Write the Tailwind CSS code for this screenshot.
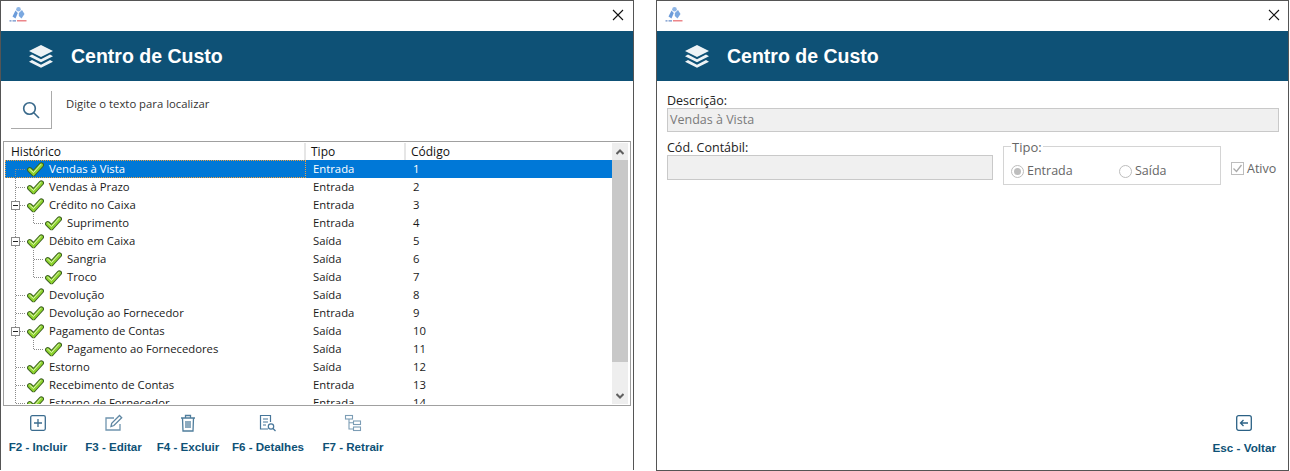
<!DOCTYPE html>
<html lang="en">
<head>
    <meta charset="UTF-8">
    <title>Centro de Custo</title>
    <script src="https://cdn.jsdelivr.net/npm/@tailwindcss/browser@4"></script>
</head>
<body class="bg-white h-[471px] overflow-hidden font-['Open_Sans',sans-serif]">
    <svg class="hidden">
        <symbol id="check" viewBox="0 0 17 15">
            <polyline points="2.700,7.800 6.500,11.500 14.300,3" fill="none" stroke="#3c5f22" stroke-width="5.400" stroke-linejoin="round" stroke-linecap="round"/>
            <polyline points="2.700,7.800 6.500,11.500 14.300,3" fill="none" stroke="#8ed42e" stroke-width="3.400" stroke-linecap="round"/>
            <polyline points="2.500,7 6.500,10.500 14,2.200" fill="none" stroke="#e8f8c8" stroke-width="0.900"/>
        </symbol>
        <symbol id="logo" viewBox="0 0 18 15">
            <circle cx="9.500" cy="2.300" r="2.300" fill="#8fb6e6"/>
            <path d="M3.500 9.500 L6.500 3.500 L8.800 6 L6.500 11.500 Z" fill="#6c9cda"/>
            <path d="M9.800 6 L13 3 L15.500 7 L12.500 11.500 L9.800 9 Z" fill="#7aa8e0"/>
            <path d="M0.500 13.800h2M3.500 13.800h3.500" stroke="#6c8fc8" stroke-width="1.200"/>
            <path d="M8 13.800h9.500" stroke="#e8686c" stroke-width="1.200"/>
        </symbol>
        <symbol id="layers" viewBox="0 0 24 24">
            <path d="M12 1 L24 7 L12 13 L0 7 Z" fill="#eef3f6"/>
            <path d="M3 10.500 L12 15.200 L21 10.500 L24 12.200 L12 18.200 L0 12.200 Z" fill="#eef3f6"/>
            <path d="M3 16 L12 20.700 L21 16 L24 17.700 L12 23.700 L0 17.700 Z" fill="#eef3f6"/>
        </symbol>
    </svg>

    <div class="flex gap-[22px] items-start">
        <!-- Lista -->
        <div class="w-[634px] h-[470px] shrink-0 border border-b-0 border-[#555555] flex flex-col">
            <div class="h-[30px] shrink-0 flex items-center justify-between pl-[8px] pr-[9px]">
                <svg class="w-[18px] h-[15px] mt-[-3px]"><use href="#logo"/></svg>
                <svg class="w-3 h-3 mt-[-2px]" viewBox="0 0 12 12"><path d="M1 1l10 10M11 1L1 11" stroke="#111" stroke-width="1.100"/></svg>
            </div>
            <div class="h-[50px] shrink-0 bg-[#0e5176] flex items-center pl-[28px] gap-[18px]">
                <svg class="w-6 h-6"><use href="#layers"/></svg>
                <span class="mt-[1px] text-white font-bold text-[19.500px] font-['Liberation_Sans',sans-serif]">Centro de Custo</span>
            </div>
            <div class="h-[60px] shrink-0 pt-[10px] pl-[10px] flex">
                <div class="w-[41px] h-[38px] border-r border-b border-[#aaaaaa] flex items-center justify-center">
                    <svg class="w-[18px] h-[18px]" viewBox="0 0 18 18" fill="none" stroke="#38688a" stroke-width="1.600"><circle cx="7.500" cy="7.500" r="5.800"/><path d="M11.800 11.800L17 17"/></svg>
                </div>
                <span class="ml-[14px] mt-[5px] text-[11.300px] leading-4 text-[#333]">Digite o texto para localizar</span>
            </div>
            <div class="ml-[2px] h-[265px] shrink-0 w-[628px] border border-[#a0a0a0] p-[1px] flex overflow-hidden">
                <div class="flex-1 min-w-0 h-full overflow-hidden">
                    <div class="h-[17px] flex text-[12px] leading-[17px] text-[#111]">
                        <div class="w-[301px] pl-[6px] border-r-2 border-[#e6e6e6]">Histórico</div>
                        <div class="w-[100px] pl-[5px] border-r-2 border-[#e6e6e6]">Tipo</div>
                        <div class="pl-[5px]">Código</div>
                    </div>
                    <div id="rows"></div>
                </div>
                <div class="w-[16px] shrink-0 bg-[#eeeeee] flex flex-col items-center mr-[1px]">
                    <div class="h-[17px] shrink-0 flex items-center justify-center">
                        <svg class="w-[8px] h-[6px]" viewBox="0 0 8 6" fill="none" stroke="#606060" stroke-width="2"><path d="M0.500 5L4 1.500L7.500 5"/></svg>
                    </div>
                    <div class="w-full h-[202px] shrink-0 bg-[#c8c8c8]"></div>
                    <div class="flex-1"></div>
                    <div class="h-[17px] shrink-0 flex items-center justify-center">
                        <svg class="w-[8px] h-[6px]" viewBox="0 0 8 6" fill="none" stroke="#606060" stroke-width="2"><path d="M0.500 1L4 4.500L7.500 1"/></svg>
                    </div>
                </div>
            </div>
            <!-- Botoes -->
            <div class="flex pt-[8px] font-['Liberation_Sans',sans-serif] font-bold text-[11.600px] text-[#0e5176]">
                <div class="w-[74px] flex flex-col items-center gap-[7px]">
                    <svg class="w-[18px] h-[18px]" viewBox="0 0 18 18" fill="none" stroke="#3b6c8f" stroke-width="1.300"><rect x="1.700" y="1.700" width="14.600" height="14.600" rx="1.500"/><path d="M9 5v8M5 9h8"/></svg>
                    <span class="leading-4">F2 - Incluir</span>
                </div>
                <div class="w-[77px] flex flex-col items-center gap-[7px]">
                    <svg class="w-[18px] h-[18px]" viewBox="0 0 18 18" fill="none" stroke="#6f94ae" stroke-width="1.300"><path d="M15 10v6H1V4h8"/><path d="M6 12.500l.7-3.200L14.500 1.500l2.200 2.200-7.800 7.800z" stroke="#5f87a3"/></svg>
                    <span class="leading-4">F3 - Editar</span>
                </div>
                <div class="w-[72px] flex flex-col items-center gap-[7px]">
                    <svg class="w-[18px] h-[18px]" viewBox="0 0 18 18" fill="none" stroke="#4f7d9c" stroke-width="1.300"><path d="M2 4h14M6.500 4V1.500h5V4M3.500 4l.5 13h10l.5-13M7 7v7M9 7v7M11 7v7"/></svg>
                    <span class="leading-4">F4 - Excluir</span>
                </div>
                <div class="w-[88px] flex flex-col items-center gap-[7px]">
                    <svg class="w-[18px] h-[18px]" viewBox="0 0 18 18" fill="none" stroke="#47769a" stroke-width="1.200"><path d="M9 15H1.500V1.500h10V8M4 5h5M4 8h5M4 11h3"/><circle cx="12" cy="12.500" r="2.700"/><path d="M14 14.500l2.500 2.500"/></svg>
                    <span class="leading-4">F6 - Detalhes</span>
                </div>
                <div class="w-[82px] flex flex-col items-center gap-[7px]">
                    <svg class="w-[18px] h-[18px]" viewBox="0 0 18 18" fill="none" stroke="#7c9db5" stroke-width="1.100"><rect x="1.500" y="1.500" width="7" height="3.500"/><rect x="9.500" y="7" width="7" height="3.500"/><rect x="9.500" y="13" width="7" height="3.500"/><path d="M5 5v10h4.500M5 8.700h4.500"/></svg>
                    <span class="leading-4">F7 - Retrair</span>
                </div>
            </div>
        </div>

        <!-- Detalhe -->
        <div class="w-[633px] h-[471px] shrink-0 border border-[#555555] flex flex-col">
            <div class="h-[30px] shrink-0 flex items-center justify-between pl-[8px] pr-[8px]">
                <svg class="w-[18px] h-[15px] mt-[-3px]"><use href="#logo"/></svg>
                <svg class="w-3 h-3 mt-[-2px]" viewBox="0 0 12 12"><path d="M1 1l10 10M11 1L1 11" stroke="#111" stroke-width="1.100"/></svg>
            </div>
            <div class="h-[50px] shrink-0 bg-[#0e5176] flex items-center pl-[28px] gap-[18px]">
                <svg class="w-6 h-6"><use href="#layers"/></svg>
                <span class="mt-[1px] text-white font-bold text-[19.500px] font-['Liberation_Sans',sans-serif]">Centro de Custo</span>
            </div>
            <div class="flex-1 pl-[10px] pr-[8px] pt-[12px] flex flex-col text-[12.500px]">
                <div class="leading-4 text-[#222]">Descrição:</div>
                <div class="h-[24px] w-[612px] mt-[-1px] border border-[#c9c9c9] bg-[#f0f0f0] pl-[2px] leading-[22px] text-[#7a7a7a]">Vendas à Vista</div>
                <div class="flex mt-[8px]">
                    <div class="w-[326px] shrink-0">
                        <div class="leading-4 text-[#222]">Cód. Contábil:</div>
                        <div class="h-[25px] mt-[-1px] border border-[#c9c9c9] bg-[#f0f0f0]"></div>
                    </div>
                    <div class="relative w-[218px] h-[39px] ml-[10px] mt-[6px] border border-[#d4d4d4] flex items-end pb-[3px] pl-[7px] text-[#666666]">
                        <span class="absolute left-[7px] top-[-8px] bg-white px-[1px] leading-4 text-[13px]">Tipo:</span>
                        <span class="flex items-center gap-[3px] w-[108px]">
                            <span class="w-[13px] h-[13px] rounded-full border border-[#bdbdbd] flex items-center justify-center"><span class="w-[7px] h-[7px] rounded-full bg-[#bdbdbd]"></span></span>
                            Entrada
                        </span>
                        <span class="flex items-center gap-[3px]">
                            <span class="w-[13px] h-[13px] rounded-full border border-[#bdbdbd]"></span>
                            Saída
                        </span>
                    </div>
                    <div class="flex items-start gap-[3px] ml-[10px] mt-[21px] text-[#666666]">
                        <span class="w-[13px] h-[13px] mt-[1px] border border-[#bdbdbd] flex items-center justify-center">
                            <svg class="w-[11px] h-[11px]" viewBox="0 0 11 11" fill="none" stroke="#aaa" stroke-width="1.300"><path d="M1.500 5.500l3 3 5-6.500"/></svg>
                        </span>
                        <span class="leading-4">Ativo</span>
                    </div>
                </div>
                <div class="flex-1"></div>
                <div class="self-end flex flex-col items-center gap-[9px] mb-[14px] mr-[4px] font-['Liberation_Sans',sans-serif] font-bold text-[11.700px] text-[#0e5176]">
                    <svg class="w-4 h-4" viewBox="0 0 16 16" fill="none" stroke="#2b6185" stroke-width="1.300"><rect x="0.700" y="0.700" width="14.600" height="14.600" rx="2"/><path d="M12 8H4.500M7.500 5L4.500 8l3 3"/></svg>
                    <span class="leading-4">Esc - Voltar</span>
                </div>
            </div>
        </div>
    </div>

    <script>
        // level, nome, tipo, codigo, tem filhos, ultimo filho
        const rows = [
            [0, 'Vendas à Vista', 'Entrada', 1],
            [0, 'Vendas à Prazo', 'Entrada', 2],
            [0, 'Crédito no Caixa', 'Entrada', 3, true],
            [1, 'Suprimento', 'Entrada', 4, false, true],
            [0, 'Débito em Caixa', 'Saída', 5, true],
            [1, 'Sangria', 'Saída', 6],
            [1, 'Troco', 'Saída', 7, false, true],
            [0, 'Devolução', 'Saída', 8],
            [0, 'Devolução ao Fornecedor', 'Entrada', 9],
            [0, 'Pagamento de Contas', 'Saída', 10, true],
            [1, 'Pagamento ao Fornecedores', 'Saída', 11, false, true],
            [0, 'Estorno', 'Saída', 12],
            [0, 'Recebimento de Contas', 'Entrada', 13],
            [0, 'Estorno de Fornecedor', 'Entrada', 14]
        ];

        const dots = 'stroke="#8a8a8a" stroke-dasharray="1 1" shape-rendering="crispEdges"';

        function connector(r, i) {
            const [level, , , , parent, last] = r;
            // tronco principal passa em todas as linhas, comeca no meio da primeira
            let s = `<line x1="10.500" x2="10.500" y1="${i === 0 ? 9 : 0}" y2="18" ${dots}/>`;
            if (level === 0) {
                s += `<line x1="11" x2="21" y1="9.500" y2="9.500" ${dots}/>`;
            } else {
                s += `<line x1="28.500" x2="28.500" y1="0" y2="${last ? 9 : 18}" ${dots}/>`;
                s += `<line x1="29" x2="39" y1="9.500" y2="9.500" ${dots}/>`;
            }
            if (parent) {
                s += `<rect x="6.500" y="5.500" width="8" height="8" fill="#fff" stroke="#8a8a8a" shape-rendering="crispEdges"/><line x1="8" x2="13" y1="9.500" y2="9.500" stroke="#222" shape-rendering="crispEdges"/>`;
            }
            return s;
        }

        document.getElementById('rows').innerHTML = rows.map((r, i) => {
            const selected = i === 0;
            const left = r[0] === 0 ? 22 : 40;
            const name = `<div class="flex items-center w-[301px] shrink-0 relative ${selected ? 'bg-[#0078d7] text-white outline outline-dotted outline-[#f0a040] -outline-offset-1' : ''}">
                <svg class="absolute left-0 top-0" width="42" height="18">${connector(r, i)}</svg>
                <svg class="w-[17px] h-[15px] shrink-0" style="margin-left:${left}px"><use href="#check"/></svg>
                <span class="ml-[5px] whitespace-nowrap">${r[1]}</span>
            </div>`;
            return `<div class="h-[18px] flex items-center text-[11.300px] leading-[18px] text-[#1a1a1a] ${selected ? 'bg-[#0078d7] text-white' : ''}">
                ${name}
                <div class="w-[100px] shrink-0 pl-[7px]">${r[2]}</div>
                <div class="pl-[7px]">${r[3]}</div>
            </div>`;
        }).join('');
    </script>
</body>
</html>
